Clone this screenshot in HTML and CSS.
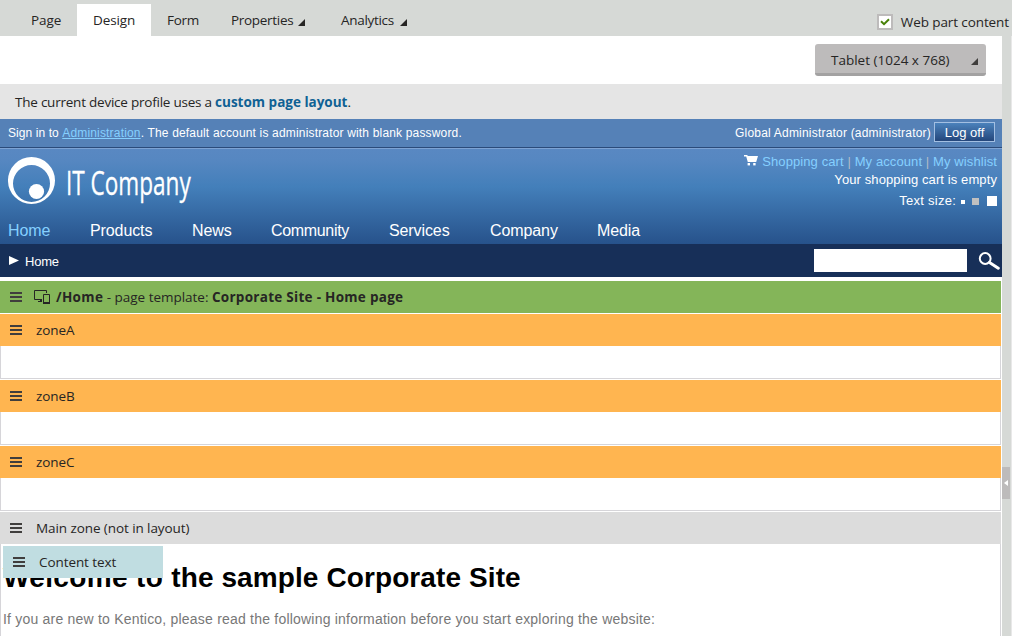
FILE: index.html
```html
<!DOCTYPE html>
<html lang="en">
<head>
<meta charset="utf-8">
<title>Corporate Site - Design</title>
<link rel="stylesheet" href="styles.css">
</head>
<body>
<svg width="0" height="0" class="defs"><defs>
  <symbol id="menu" viewBox="0 0 12 10"><path d="M0 0h12v2H0zM0 4h12v2H0zM0 8h12v2H0z" fill="#403e3d"/></symbol>
  <symbol id="corner" viewBox="0 0 7 7"><path d="M7 0v7H0z" fill="currentColor"/></symbol>
</defs></svg>
<div class="app">
  <nav class="tabs">
    <a class="tab tab-page"><span>Page</span></a>
    <a class="tab tab-design active"><span>Design</span></a>
    <a class="tab tab-form"><span>Form</span></a>
    <a class="tab tab-props"><span>Properties</span><svg class="corner"><use href="#corner"/></svg></a>
    <a class="tab tab-analytics"><span>Analytics</span><svg class="corner"><use href="#corner"/></svg></a>
    <label class="check"><span class="box"><svg width="10" height="8" viewBox="0 0 10 8"><path d="M1 3.3 4 6.2 9 1.2" fill="none" stroke="#498209" stroke-width="2"/></svg></span><span class="check-text">Web part content</span></label>
  </nav>
  <div class="main">
    <div class="page">
      <div class="device"><button class="device-btn"><span>Tablet (1024 x 768)</span><svg class="corner"><use href="#corner"/></svg></button></div>
      <div class="info"><span>The current device profile uses a </span><b>custom page layout</b><span>.</span></div>
      <div class="signin">
        <p class="sign-text"><span class="sign-lead">Sign in to </span><a>Administration</a>. The default account is administrator with blank password.</p>
        <p class="user">Global Administrator (administrator)</p>
        <button class="logoff">Log off</button>
      </div>
      <header class="header">
        <div class="brand">
          <svg class="logo" width="48" height="48" viewBox="0 0 48 48"><path fill="#fff" fill-rule="evenodd" d="M23.5 0a23.5 23.5 0 1 0 0 47a23.5 23.5 0 1 0 0-47zM23.5 8a18.5 18.5 0 1 1 0 37a18.5 18.5 0 1 1 0-37z"/><circle cx="28.5" cy="34.5" r="7.6" fill="#fff"/></svg>
          <span class="brand-name">IT Company</span>
        </div>
        <div class="tools">
          <div class="links"><svg class="cart" width="14" height="11" viewBox="0 0 14 11"><path fill="#fff" d="M0 0h3.2l.6 1H14l-1.8 6H3.8L2.2 1.6H0z"/><rect x="3.6" y="8" width="2.4" height="2.4" fill="#fff"/><rect x="9.2" y="8" width="2.4" height="2.4" fill="#fff"/></svg><span class="link-text"><a>Shopping cart</a> <i>|</i> <a>My account</a> <i>|</i> <a>My wishlist</a></span></div>
          <div class="empty">Your shopping cart is empty</div>
          <div class="size"><span>Text size:</span><i class="s1"></i><i class="s2"></i><i class="s3"></i></div>
        </div>
        <ul class="menu">
          <li class="m-home">Home</li><li class="m-products">Products</li><li class="m-news">News</li><li class="m-community">Community</li><li class="m-services">Services</li><li class="m-company">Company</li><li>Media</li>
        </ul>
      </header>
      <div class="crumbs">
        <svg width="10" height="9" viewBox="0 0 10 9"><path d="M0 0 10 4.5 0 9z" fill="#fff"/></svg>
        <span class="crumb">Home</span>
        <span class="search"></span>
        <svg class="lens" width="22" height="18" viewBox="0 0 22 18"><circle cx="7.2" cy="6.5" r="5.4" fill="none" stroke="#fff" stroke-width="2"/><path d="M11.5 10.5 20.3 16.2" stroke="#fff" stroke-width="3" stroke-linecap="round"/></svg>
      </div>
      <div class="bar template"><svg class="burger"><use href="#menu"/></svg>
        <svg class="devices" width="16" height="15" viewBox="0 0 16 15"><path d="M12.5 3V.5H.5v9H8M9.5 4.5h6v9h-6z" fill="none" stroke="#262524"/><path d="M6 10h2v2H4v-1h2zM9 12h7v2H9z" fill="#262524"/></svg>
        <span class="template-text"><b class="t1">/Home</b><span class="t2"> - page template: </span><b class="t3">Corporate Site - Home page</b></span>
      </div>
      <section class="zone"><div class="bar orange"><svg class="burger"><use href="#menu"/></svg><span class="zone-name">zoneA</span></div><div class="zone-body"></div></section>
      <section class="zone"><div class="bar orange"><svg class="burger"><use href="#menu"/></svg><span class="zone-name">zoneB</span></div><div class="zone-body"></div></section>
      <section class="zone"><div class="bar orange"><svg class="burger"><use href="#menu"/></svg><span class="zone-name">zoneC</span></div><div class="zone-body"></div></section>
      <section class="zone last"><div class="bar gray"><svg class="burger"><use href="#menu"/></svg><span class="zone-name main-zone">Main zone (not in layout)</span></div>
        <div class="content">
          <div class="widget"><svg class="burger"><use href="#menu"/></svg><span class="widget-name">Content text</span></div>
          <h1><span class="h-lead">Welcome to </span>the sample Corporate Site</h1>
          <p class="intro">If you are new to Kentico, please read the following information before you start exploring the website:</p>
        </div>
      </section>
    </div>
    <div class="splitter"><div class="grip"><svg width="4" height="6" viewBox="0 0 4 6"><path d="M4 0v6L0 3z" fill="#fff"/></svg></div></div>
  </div>
</div>
</body>
</html>
```
FILE: styles.css
```css
* { box-sizing: border-box; }
body { margin: 0; background: #fff; overflow: hidden; font: 13.5px/20px "Open Sans", "Noto Sans", sans-serif; color: #262524; }
p, h1, ul { margin: 0; padding: 0; }
i { font-style: normal; }
button { border: 0; padding: 0; font: inherit; color: inherit; }
span, p, a, li, h1, b { white-space: nowrap; }
.defs { display: block; position: absolute; }
.app { width: 1012px; height: 636px; overflow: hidden; display: flex; flex-direction: column; }
.tabs { height: 36px; flex: none; background: #d6d9d6; padding: 4px 0 0 15px; display: flex; }
.tab { padding: 6px 0 0 16px; height: 32px; display: flex; }
.tab-page { width: 62px; }
.tab-design { width: 74px; }
.tab-form { width: 64px; }
.tab-props { width: 110px; }
.tab-analytics { width: 100px; }
.tab span { letter-spacing: -.3px; }
.tab-page span, .tab-design span { letter-spacing: -.1px; }
.active { background: #fff; }
.corner { width: 7px; height: 7px; margin: 9px 0 0 5px; flex: none; }
.tab-analytics .corner { margin-left: 6px; }
.check { margin-left: auto; padding: 8px 3px 0 0; display: flex; }
.check-text { letter-spacing: -.1px; }
.box { width: 16px; height: 16px; margin: 2px 8px 0 0; border: 2px solid #bdbbbb; background: #fff; display: flex; align-items: center; justify-content: center; }
.main { display: flex; flex: 1; min-height: 0; }
.page { width: 1002px; }
.device { height: 48px; padding: 8px 16px 0 0; display: flex; justify-content: flex-end; }
.device-btn { width: 171px; height: 32px; border-radius: 3px; background: #bdbbbb; border-bottom: 3px solid #a3a2a2; padding: 6px 8px 0 16px; display: flex; justify-content: space-between; align-items: flex-start; }
.device-btn .corner { color: #403e3d; margin-top: 8px; }
.info { height: 35px; background: #e5e5e5; padding: 8px 0 0 15px; display: flex; white-space: pre; }
.info span { white-space: pre; letter-spacing: -.23px; }
.info b { color: #0f6194; }
.signin { height: 30px; background: #5581b7; border-bottom: 1px solid #7ea3d3; box-shadow: inset 0 -1px #2b4b7a; padding-left: 8px; display: flex; color: #fff; font: 12px/28px "Liberation Sans", sans-serif; letter-spacing: .17px; }
.sign-lead { letter-spacing: .08px; }
.signin a { color: #85d0ff; text-decoration: underline; }
.user { margin-left: auto; letter-spacing: .2px; }
.logoff { width: 61px; height: 20px; margin: 3px 7px 0 3px; border: 1px solid #a3bfe2; background: linear-gradient(#4b82bc, #24467b); font-size: 13px; line-height: 19px; }
.header { height: 95px; background: linear-gradient(#5988c2, #5687c1 12%, #437fba 40%, #27528b); color: #fff; font-family: "Liberation Sans", sans-serif; display: grid; grid-template: 72px 23px / 1fr auto; }
.brand { padding: 8px 0 0 8px; display: flex; }
.brand-name { font: 32px/48px "Open Sans", sans-serif; margin: 2px 0 0 10px; transform: scaleX(.705); transform-origin: 0 0; -webkit-text-stroke: .3px #fff; }
.tools { padding: 4px 5px 0 0; font-size: 13px; line-height: 18px; letter-spacing: .1px; text-align: right; }
.tools a { color: #85d0ff; }
.links { display: flex; justify-content: flex-end; }
.links i { color: #b3bcc6; }
.cart { margin: 2px 4px 0 0; }
.size { display: flex; justify-content: flex-end; padding-top: 3px; letter-spacing: .25px; }
.size i { background: #fff; }
.s1 { width: 4px; height: 4px; margin: 8px 7px 0 5px; }
.size .s2 { width: 7px; height: 7px; margin: 6px 8px 0 0; background: #c0c0c0; }
.s3 { width: 10px; height: 10px; margin-top: 4px; }
.menu { grid-column: 1 / 3; list-style: none; display: flex; padding-left: 8px; font-size: 16px; line-height: 20px; letter-spacing: -.1px; }
.m-home { width: 82px; color: #85d0ff; }
.m-products { width: 102px; }
.m-news { width: 79px; }
.m-community { width: 118px; letter-spacing: -.33px; }
.m-services { width: 101px; }
.m-company { width: 107px; }
.crumbs { height: 33px; background: #172f58; color: #fff; padding-left: 9px; display: flex; align-items: center; font: 13px/20px "Liberation Sans", sans-serif; }
.crumb { margin-left: 6px; padding-top: 2px; letter-spacing: -.2px; }
.search { width: 153px; height: 23px; background: #fff; margin-left: auto; }
.lens { margin: 0 2px 0 11px; }
.bar { height: 32px; width: 1001px; padding-left: 10px; display: flex; align-items: center; }
.burger { width: 12px; height: 10px; flex: none; }
.template { background: #84b559; margin: 4px 0 1px; }
.devices { margin: 0 6px 0 12px; }
.template-text { white-space: pre; display: flex; }
.template-text span { white-space: pre; }
.t1 { letter-spacing: .35px; }
.t2 { letter-spacing: -.02px; }
.t3 { letter-spacing: .28px; }
.orange { background: #ffb550; }
.gray { background: #dcdcdc; }
.zone { width: 1001px; margin-bottom: 1px; }
.zone-name { margin-left: 14px; letter-spacing: -.08px; }
.zone-body { height: 33px; border: 1px solid #d6d5d9; border-top: 0; }
.content { height: 92px; border: solid #d6d5d9; border-width: 0 1px; position: relative; padding: 18px 0 0 2px; font-family: "Liberation Sans", sans-serif; }
.widget { position: absolute; left: 2px; top: 2px; width: 160px; height: 32px; padding-left: 10px; background: #c0dde1; display: flex; align-items: center; font-family: "Open Sans", sans-serif; }
.widget-name { margin-left: 14px; letter-spacing: -.08px; }
h1 { font-size: 28px; line-height: 32px; color: #000; letter-spacing: .1px; }
.h-lead { letter-spacing: .35px; }
.intro { margin-top: 15px; font-size: 14px; line-height: 20px; color: #777; letter-spacing: .21px; }
.splitter { width: 10px; border-right: 1px solid #e8e8e8; background: #d6d9d6; padding-top: 431px; }
.grip { width: 8px; height: 32px; background: #bdbbbb; display: flex; align-items: center; justify-content: center; }
```
